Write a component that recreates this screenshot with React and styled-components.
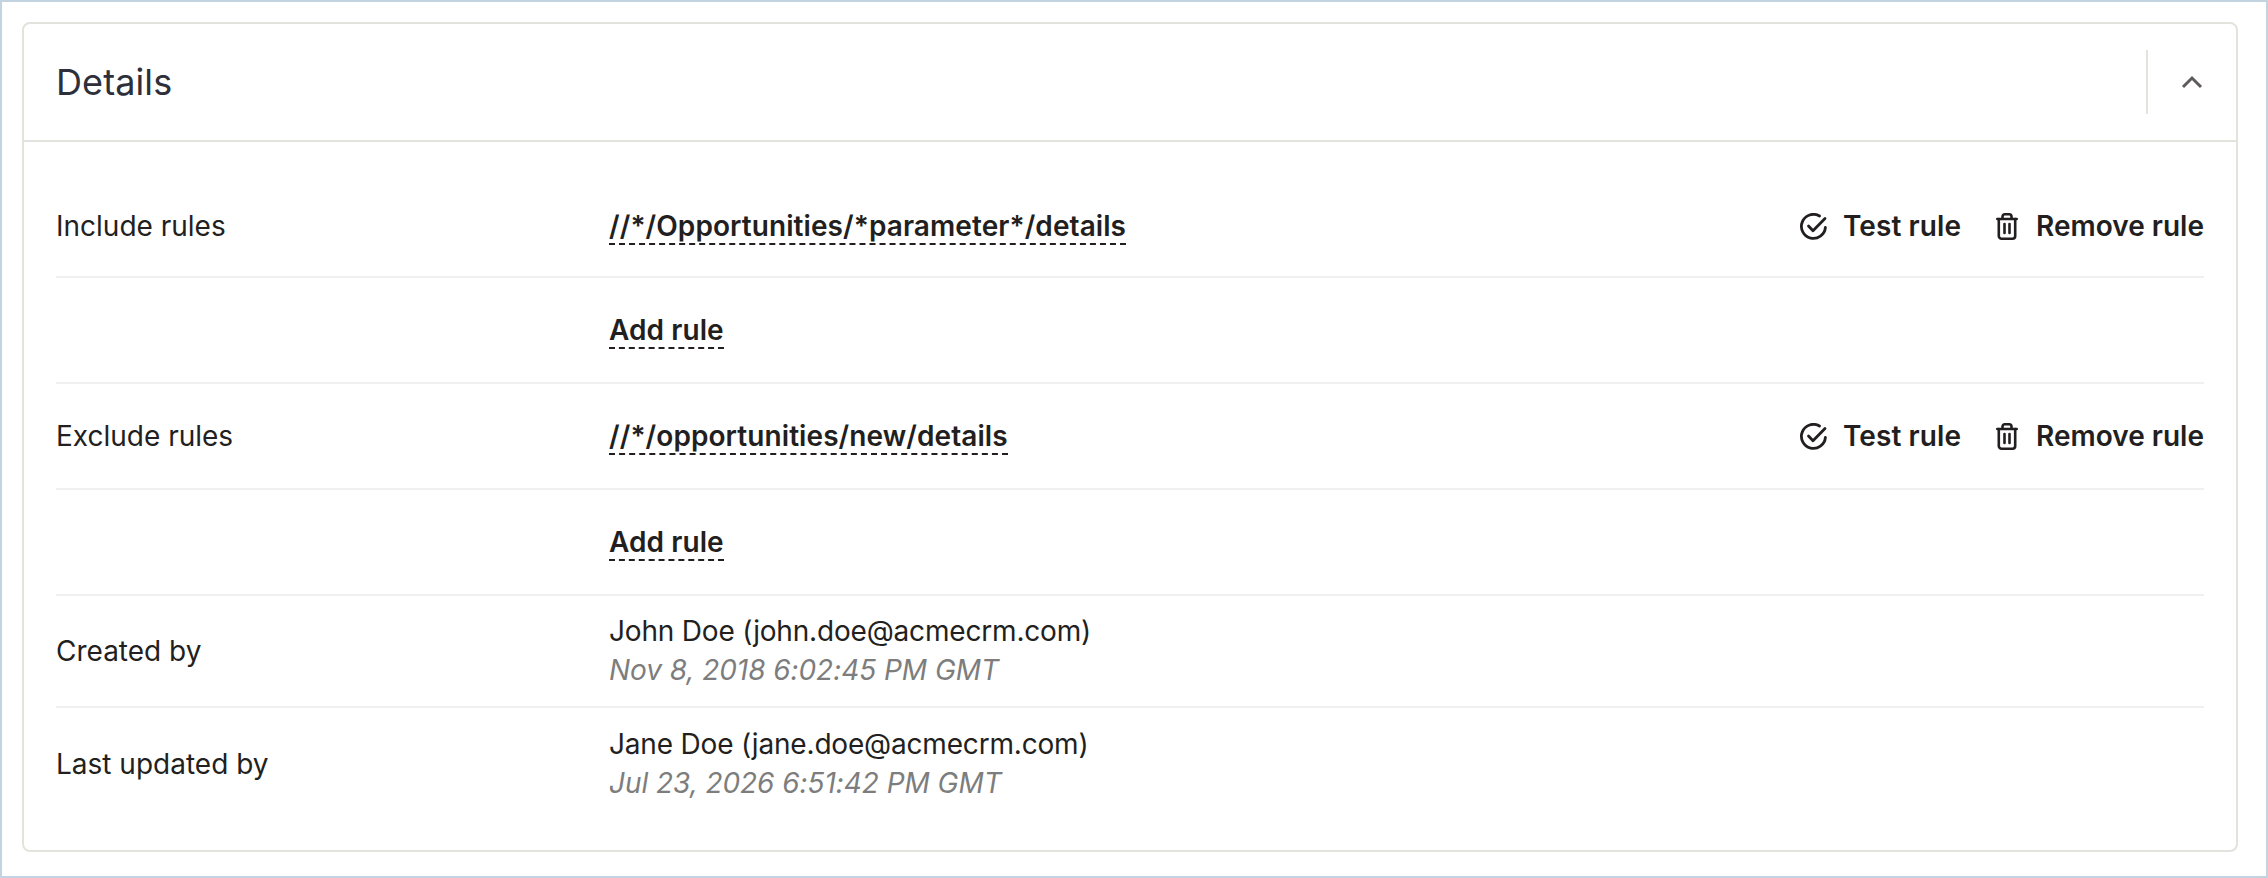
import React from "react";
import styled, { createGlobalStyle } from "styled-components";

const GlobalStyle = createGlobalStyle`
  * {
    box-sizing: border-box;
  }

  html, body {
    margin: 0;
    background: #fff;
  }

  body {
    font-family: Inter, "Liberation Sans", sans-serif;
    color: #231f20;
  }
`

const Page = styled.div`
  height: 878px;
  padding: 20px 28px 24px 20px;
  border: 2px solid #c3d3df;
`

const Card = styled.section`
  height: 100%;
  border: 2px solid #e3e3de;
  border-radius: 8px;
  display: flex;
  flex-direction: column;
`

const Header = styled.header`
  height: 118px;
  flex: none;
  display: flex;
  align-items: center;
  justify-content: space-between;
  padding-left: 32px;
  border-bottom: 2px solid #e3e3de;
`

const Title = styled.h2`
  margin: 0;
  font-size: 36px;
  font-weight: 400;
  letter-spacing: 0.1px;
  color: #2d2f3a;
`

const Collapse = styled.div`
  width: 90px;
  height: 64px;
  display: flex;
  align-items: center;
  justify-content: center;
  border-left: 2px solid #e3e3de;
  color: #5f5b5b;
`

const Body = styled.div`
  padding: 34px 32px 32px;
`

const Row = styled.div`
  display: grid;
  grid-template-columns: 553px 1fr auto;
  align-items: center;
  min-height: ${({$tall}) => ($tall ? '112px' : '106px')};
  border-bottom: ${({$last}) => ($last ? 'none' : '2px solid #f0f0f0')};

  &:first-child {
    min-height: 102px;
  }
`

const Label = styled.div`
  font-size: 28px;
`

const RuleLink = styled.a`
  justify-self: start;
  padding-top: 2px;
  font-size: 28px;
  font-weight: 600;
  line-height: 33px;
  letter-spacing: 0.08px;
  border-bottom: 2px dashed #231f20;
`

const Actions = styled.div`
  display: flex;
  gap: 35px;
`

const Action = styled.div`
  display: flex;
  align-items: center;
  gap: ${({$iconGap}) => $iconGap}px;
  font-size: 28px;
  font-weight: 600;
`

const TestAction = styled(Action)`
  letter-spacing: 0.1px;
`

const Info = styled.div`
  display: flex;
  flex-direction: column;
  gap: 4px;
`

const Name = styled.div`
  font-size: 28px;
  line-height: 35px;
  letter-spacing: -0.18px;
`

const Stamp = styled.div`
  font-size: 28px;
  line-height: 35px;
  font-style: italic;
  letter-spacing: -0.05px;
  color: #7d7d7d;
`

const ChevronIcon = () => (
    <svg width="22" height="14" viewBox="0 0 22 14" fill="none" stroke="currentColor" strokeWidth="3">
        <path d="M2 12 L11 3 L20 12"/>
    </svg>
)

const CheckIcon = () => (
    <svg width="27" height="27" viewBox="0 0 27 27" fill="none" stroke="currentColor" strokeWidth="2.8" strokeLinecap="round" strokeLinejoin="round">
        <path d="M25.4 14.5 A12 12 0 1 1 19.5 3"/>
        <path d="M8.5 13 L13 17.8 L25 5.5"/>
    </svg>
)

const TrashIcon = () => (
    <svg width="22" height="27" viewBox="0 0 22 27" fill="none" stroke="currentColor" strokeWidth="2.6" strokeLinecap="round" strokeLinejoin="round">
        <path d="M1.3 6 H20.7"/>
        <path d="M2.8 6 V23 A2.7 2.7 0 0 0 5.5 25.7 H16.5 A2.7 2.7 0 0 0 19.2 23 V6"/>
        <path d="M6.5 5.5 V3.6 A2.3 2.3 0 0 1 8.8 1.3 H13.2 A2.3 2.3 0 0 1 15.5 3.6 V5.5"/>
        <path d="M8.5 11 V20"/>
        <path d="M13.5 11 V20"/>
    </svg>
)

const RuleActions = () => (
    <Actions>
        <TestAction $iconGap={16}><CheckIcon/>Test rule</TestAction>
        <Action $iconGap={18}><TrashIcon/>Remove rule</Action>
    </Actions>
)

const App = () => {
    return (
        <Page>
            <GlobalStyle/>
            <Card>
                <Header>
                    <Title>Details</Title>
                    <Collapse><ChevronIcon/></Collapse>
                </Header>
                <Body>
                    <Row>
                        <Label>Include rules</Label>
                        <RuleLink>//*/Opportunities/*parameter*/details</RuleLink>
                        <RuleActions/>
                    </Row>
                    <Row>
                        <span/>
                        <RuleLink>Add rule</RuleLink>
                    </Row>
                    <Row>
                        <Label>Exclude rules</Label>
                        <RuleLink>//*/opportunities/new/details</RuleLink>
                        <RuleActions/>
                    </Row>
                    <Row>
                        <span/>
                        <RuleLink>Add rule</RuleLink>
                    </Row>
                    <Row $tall>
                        <Label>Created by</Label>
                        <Info>
                            <Name>John Doe (john.doe@acmecrm.com)</Name>
                            <Stamp>Nov 8, 2018 6:02:45 PM GMT</Stamp>
                        </Info>
                    </Row>
                    <Row $tall $last>
                        <Label>Last updated by</Label>
                        <Info>
                            <Name>Jane Doe (jane.doe@acmecrm.com)</Name>
                            <Stamp>Jul 23, 2026 6:51:42 PM GMT</Stamp>
                        </Info>
                    </Row>
                </Body>
            </Card>
        </Page>
    )
}

export default App
